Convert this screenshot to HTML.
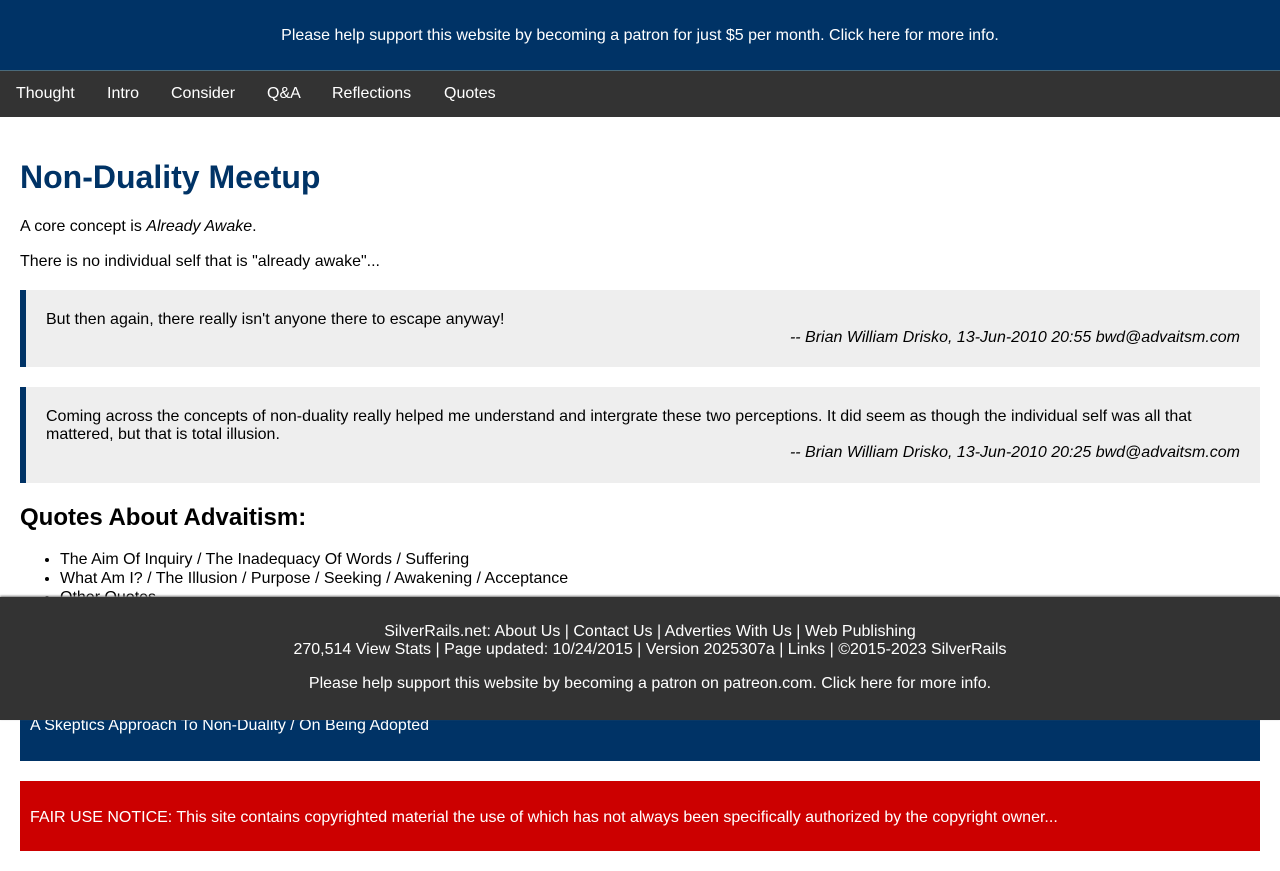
<!DOCTYPE html>
<html><head><style>
body{margin:0;font-family:"Liberation Sans",Arial,sans-serif;font-size:16px;color:#000;background:#fff;width:1280px;height:871px;position:relative;overflow:hidden}
.top{position:absolute;left:0;top:0;width:1280px;height:70px;background:#003366;color:#fff;text-align:center;line-height:72px;border-bottom:1px solid #4a6a7a}
.nav{position:absolute;top:71px;left:0;width:1280px;height:46px;background:#333}
.nav span{position:absolute;top:0;line-height:46px;color:#fff}
.a{position:absolute;left:20px}
h1{position:absolute;left:20px;top:159px;margin:0;font-size:32px;color:#003366;font-weight:bold}
.q{position:absolute;left:20px;width:1194px;background:#eee;border-left:6px solid #003366;padding:0 20px;line-height:18px}
.q .c{text-align:right;font-style:italic}
h2{position:absolute;left:20px;top:504px;margin:0;font-size:24px}
ul{position:absolute;left:20px;top:550px;margin:0;padding-left:40px;line-height:19px}
.blue{position:absolute;left:20px;top:680px;width:1240px;height:81px;background:#003366;color:#fff}
.red{position:absolute;left:20px;top:781px;width:1240px;height:70px;background:#cc0000;color:#fff}
.foot{position:absolute;left:0;top:597px;width:1260px;padding-left:20px;height:123px;background:#333;color:#fff;text-align:center;box-shadow:0 -1px 2px #777}
</style></head><body>
<div class="top">Please help support this website by becoming a patron for just $5 per month. Click here for more info.</div>
<div class="nav"><span style="left:16px">Thought</span><span style="left:107px">Intro</span><span style="left:171px">Consider</span><span style="left:267px">Q&amp;A</span><span style="left:332px">Reflections</span><span style="left:444px">Quotes</span></div>
<h1>Non-Duality Meetup</h1>
<div class="a" style="top:218px">A core concept is <i>Already Awake</i>.</div>
<div class="a" style="top:253px">There is no individual self that is "already awake"...</div>
<div class="q" style="top:290px;height:77px"><div style="padding-top:21px">But then again, there really isn't anyone there to escape anyway!</div><div class="c">-- Brian William Drisko, 13-Jun-2010 20:55 bwd@advaitsm.com</div></div>
<div class="q" style="top:387px;height:96px"><div style="padding-top:21px">Coming across the concepts of non-duality really helped me understand and intergrate these two perceptions. It did seem as though the individual self was all that mattered, but that is total illusion.</div><div class="c">-- Brian William Drisko, 13-Jun-2010 20:25 bwd@advaitsm.com</div></div>
<h2>Quotes About Advaitism:</h2>
<ul><li>The Aim Of Inquiry / The Inadequacy Of Words / Suffering</li><li>What Am I? / The Illusion / Purpose / Seeking / Awakening / Acceptance</li><li>Other Quotes</li></ul>
<div class="blue"><div style="position:absolute;left:10px;top:37px">A Skeptics Approach To Non-Duality / On Being Adopted</div></div>
<div class="red"><div style="position:absolute;left:10px;top:28px">FAIR USE NOTICE: This site contains copyrighted material the use of which has not always been specifically authorized by the copyright owner...</div></div>
<div class="foot"><div style="padding-top:26px;line-height:18px">SilverRails.net: About Us | Contact Us | Adverties With Us | Web Publishing<br>270,514 View Stats | Page updated: 10/24/2015 | Version 2025307a | Links | ©2015-2023 SilverRails</div><div style="margin-top:16px">Please help support this website by becoming a patron on patreon.com. Click here for more info.</div></div>
</body></html>
